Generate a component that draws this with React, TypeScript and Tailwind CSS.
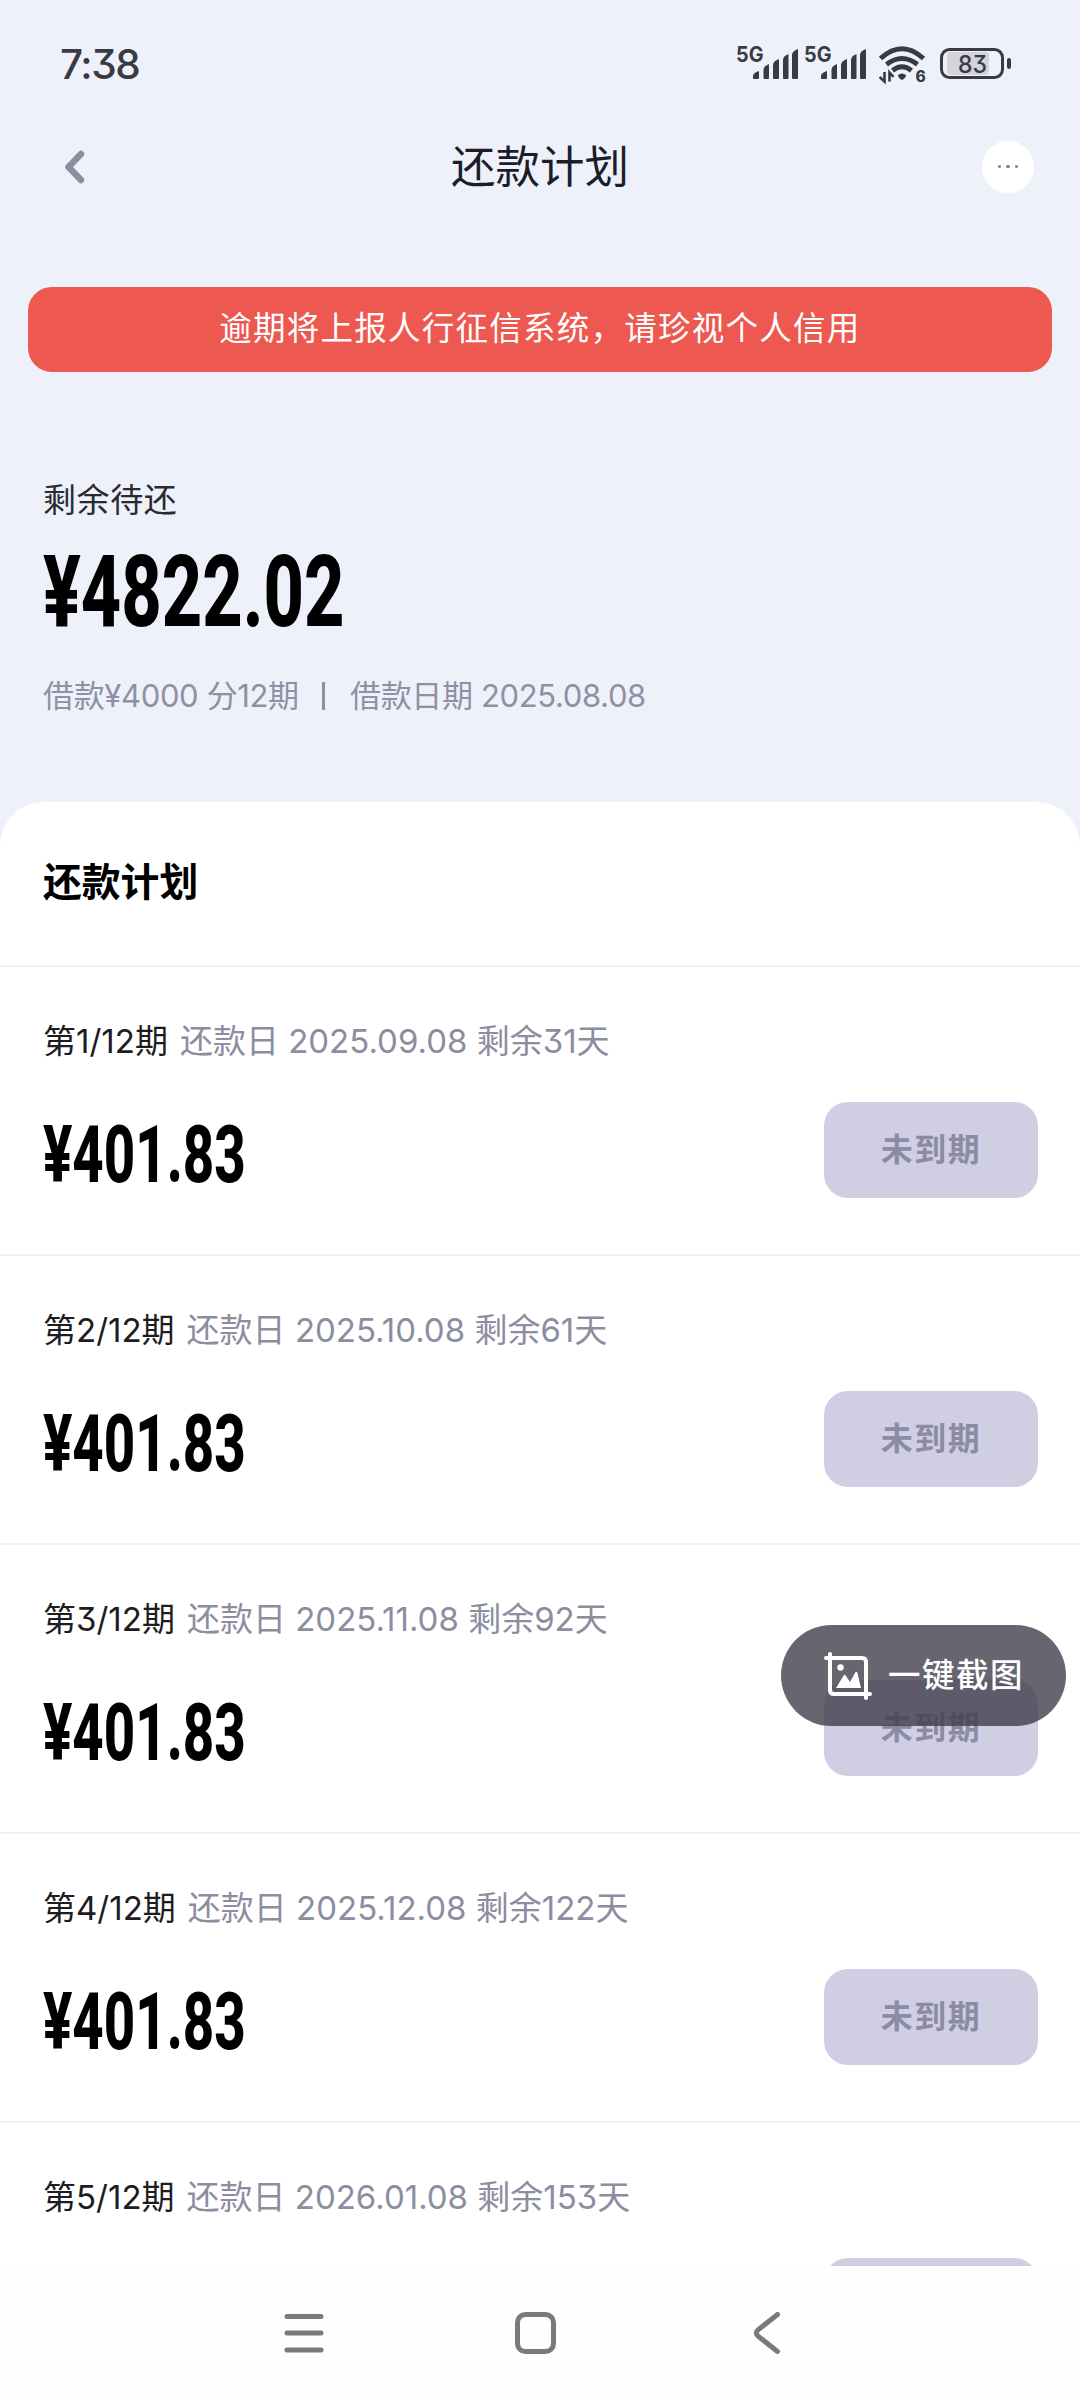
import React from 'react';

const CJK = "font-['Inter','Noto_Sans_CJK_SC',sans-serif] [font-feature-settings:'cv09']";

const rows = [
  { n: 1, date: '2025.09.08', left: 31 },
  { n: 2, date: '2025.10.08', left: 61 },
  { n: 3, date: '2025.11.08', left: 92 },
  { n: 4, date: '2025.12.08', left: 122 },
  { n: 5, date: '2026.01.08', left: 153 },
];

function Signal() {
  return (
    <svg width="64" height="48" viewBox="-1 -8 64 48" fill="#3a3b42">
      <path d="M16 33v-2q0-3 6-5v7q0 1-1 1h-4q-1 0-1-1zM26.500 33v-8q0-4 5.500-6v14q0 1-1 1h-3.500q-1 0-1-1zM36 33v-13q0-4 6-6v19q0 1-1 1h-4q-1 0-1-1zM46 33v-18q0-4 5.500-6v24q0 1-1 1h-3.500q-1 0-1-1zM55 33v-23q0-4 6-6v29q0 1-1 1h-4q-1 0-1-1z" />
      <text x="-1" y="17" fontFamily="Inter" fontWeight="700" fontSize="21.500" textLength="27.500" lengthAdjust="spacingAndGlyphs">5G</text>
    </svg>
  );
}

function Wifi() {
  return (
    <svg width="48" height="46" viewBox="0 0 48 46" fill="none" stroke="#3a3b42" strokeWidth="4.800">
      <path d="M1.500 13.500Q23 -6 44.500 13.500M7.500 19.500Q23 7.500 38.500 19.500M13.500 25.500Q23 18 32.500 25.500" />
      <path d="M19 30q4-3 8 0q0 3-4 5q-4-2-4-5z" fill="#3a3b42" stroke="none" />
      <path d="M5.500 27v9.500l-5-4.500M10.500 36.500v-9l4 4.500" strokeWidth="2.600" />
      <text x="36.500" y="36.500" fontFamily="Inter" fontWeight="800" fontSize="15.500" fill="#3a3b42" stroke="none">6</text>
    </svg>
  );
}

function StatusBar() {
  return (
    <div className="flex h-[112px] items-start justify-between pl-[60px] pr-[68px] text-[#3a3b42]">
      <div className="mt-[41px] text-[40.500px] font-medium leading-[48px] tracking-[-1.400px]">7:38</div>
      <div className="mt-[37px] flex items-start">
        <div className="mr-[4px]"><Signal /></div>
        <div className="mr-[11px]"><Signal /></div>
        <div className="mt-[8px]"><Wifi /></div>
        <svg className="ml-[13px] mt-[11px]" width="72" height="32" viewBox="0 0 72 32">
          <rect x="7" y="4" width="42" height="23" rx="4" fill="#d2d3db" />
          <rect x="1.500" y="1.500" width="61" height="28" rx="8" fill="none" stroke="#3a3b42" strokeWidth="3" />
          <rect x="67" y="10" width="4" height="11" rx="2" fill="#3a3b42" />
          <text x="18" y="25" fontFamily="Inter" fontWeight="500" fontSize="24.500" fill="#3a3b42" textLength="29" lengthAdjust="spacingAndGlyphs">83</text>
        </svg>
      </div>
    </div>
  );
}

function NavBar() {
  return (
    <div className="grid h-[109px] grid-cols-[1fr_auto_1fr] items-center pl-[63px] pr-[46px]">
      <svg width="52" height="40" viewBox="-1 0 52 40" fill="none" stroke="#8c8da3" strokeWidth="6.500" strokeLinecap="round" strokeLinejoin="round">
        <path d="M17 7L4.500 20L17 33" />
      </svg>
      <h1 className="mr-[17px] text-[44.500px] leading-[60px] text-[#1b1d2a]">还款计划</h1>
      <div className="flex size-[52px] items-center justify-center gap-[5px] justify-self-end rounded-full bg-white">
        <i className="size-[3.500px] rounded-full bg-[#808080]" />
        <i className="size-[3.500px] rounded-full bg-[#808080]" />
        <i className="size-[3.500px] rounded-full bg-[#808080]" />
      </div>
    </div>
  );
}

function Row({ row }: { row: (typeof rows)[number] }) {
  return (
    <div className="h-[289px] shrink-0 border-t-[2px] border-[#f1f1f3] pl-[43px] pr-[42px]">
      <div className="mt-[50px] flex h-[50px] items-center whitespace-pre text-[33px] text-[#8c8da0]">
        <span className="text-[#1c1c22]">第{row.n}/12期</span>
        <span className="ml-[12px]">还款日 {row.date} 剩余{row.left}天</span>
      </div>
      <div className="mt-[35px] flex items-start justify-between">
        <div className="mt-[13px] origin-left scale-x-[0.690] font-['Roboto'] text-[79px] font-extrabold leading-[80px] text-black">¥401.83</div>
        <div className="flex h-[96px] w-[214px] items-center justify-center rounded-[24px] bg-[#cfcee3] text-[32px] font-bold tracking-[1.500px] text-[#8b8ba3]">未到期</div>
      </div>
    </div>
  );
}

export default function App() {
  return (
    <div className={`relative flex h-[2400px] w-[1080px] flex-col overflow-hidden bg-[#eef1fa] ${CJK}`}>
      <StatusBar />
      <NavBar />
      <div className="mx-[28px] mt-[66px] flex h-[85px] items-center justify-center rounded-[24px] bg-[#ed5850] text-[32.500px] tracking-[1.250px] text-white">
        逾期将上报人行征信系统，请珍视个人信用
      </div>
      <div className="h-[430px] pl-[43px]">
        <div className="mt-[103px] text-[33px] leading-[50px] tracking-[0.600px] text-[#2a2a30]">剩余待还</div>
        <div className="mt-[22px] w-fit origin-left scale-x-[0.695] font-['Roboto'] text-[101px] font-extrabold leading-[90px] text-black">¥4822.02</div>
        <div className="mt-[36px] flex items-center whitespace-pre text-[31px] leading-[46px] text-[#8e90a5]">
          <span className="w-[257px] tracking-[-0.350px]">借款¥4000 分12期</span>
          <span className="ml-[22px] mr-[25px] h-[28px] w-[3px] bg-[#8e90a5]" />
          <span className="tracking-[-0.350px]">借款日期 2025.08.08</span>
        </div>
      </div>
      <div className="flex h-[1464px] shrink-0 flex-col overflow-hidden rounded-t-[44px] bg-white">
        <h2 className="h-[163px] shrink-0 pl-[43px] pt-[50px] text-[38.800px] font-bold leading-[60px] text-black">还款计划</h2>
        {rows.map((r) => <Row key={r.n} row={r} />)}
      </div>
      <div className="flex flex-1 items-start bg-[#fefefe] pl-[281px] pt-[46px]">
        <svg width="504" height="42" viewBox="-3 0 504 42" fill="none" stroke="#7a7a7a" strokeWidth="5" strokeLinecap="round" strokeLinejoin="round">
          <path d="M3 4.500h34M3 21h34M3 38h34" />
          <rect x="233.500" y="2.500" width="36" height="37" rx="8" />
          <path d="M493.500 2.500L474.500 17.500Q470 21 474.500 24.500L493.500 39.500" />
        </svg>
      </div>
      <div className="absolute left-[781px] top-[1625px] flex h-[101px] w-[285px] items-center rounded-full bg-[#403e4c]/80 pl-[43px] text-[32.500px] font-medium text-white">
        <svg width="48" height="48" viewBox="0 0 48 48" fill="none" stroke="white" strokeWidth="4" strokeLinecap="round">
          <path d="M6 2V38Q6 42 10 42H46M2 6H38Q42 6 42 10V46" />
          <circle cx="16.500" cy="15.500" r="3.200" fill="white" stroke="none" />
          <path d="M12 36L20 23Q21 22 22 24L26 30L31.500 20Q32.500 19 33.500 21L37 36Z" fill="white" stroke="none" />
        </svg>
        <span className="ml-[16px] mt-px tracking-[1.500px]">一键截图</span>
      </div>
    </div>
  );
}
